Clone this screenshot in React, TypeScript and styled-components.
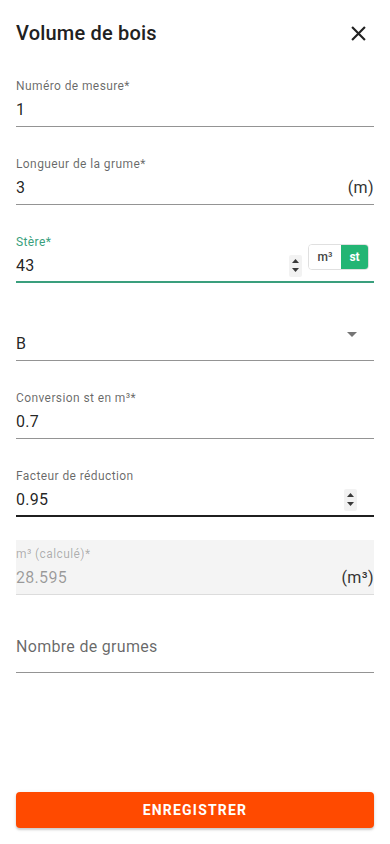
import styled, { createGlobalStyle } from "styled-components";

const GlobalStyle = createGlobalStyle`
  html, body {
    margin: 0;
    padding: 0;
    background: #fff;
    font-family: Roboto, "Liberation Sans", Arial, sans-serif;
  }
  * {
    box-sizing: border-box;
  }
`;

const Page = styled.div`
  height: 844px;
  padding: 0 16px 16px;
  display: flex;
  flex-direction: column;
  background: #fff;
`;

const Header = styled.div`
  height: 66px;
  display: flex;
  align-items: center;
  justify-content: space-between;
  margin-bottom: 13px;
`;

const Title = styled.h2`
  margin: 0;
  font-size: 20px;
  font-weight: 500;
  color: #212121;
  letter-spacing: 0.2px;
`;

const CloseButton = styled.button`
  width: 24px;
  height: 24px;
  padding: 0;
  margin-right: 4px;
  border: none;
  background: transparent;
  display: flex;
  align-items: center;
  justify-content: center;
  cursor: pointer;
`;

const Form = styled.div`
  display: flex;
  flex-direction: column;
  gap: 30px;
`;

const Field = styled.div<{ $underline?: "focused" | "hover" | "disabled" }>`
  height: ${(p) => (p.$underline === "disabled" ? "55px" : "48px")};
  display: flex;
  flex-direction: column;
  border-bottom: ${(p) =>
    p.$underline === "focused"
      ? "2px solid #3a9f7d"
      : p.$underline === "hover"
      ? "2px solid #1f1f1f"
      : p.$underline === "disabled"
      ? "1px solid #dcdcdc"
      : "1px solid rgba(0, 0, 0, 0.42)"};
  background: ${(p) => (p.$underline === "disabled" ? "#f4f4f4" : "transparent")};
  margin-top: ${(p) => (p.$underline === "disabled" ? "-7px" : "0")};
  padding-top: ${(p) => (p.$underline === "disabled" ? "7px" : "0")};
`;

const Label = styled.label<{ $color?: string; $large?: boolean }>`
  display: block;
  min-height: 14px;
  font-size: ${(p) => (p.$large ? "16px" : "12px")};
  line-height: ${(p) => (p.$large ? "23px" : "14px")};
  margin-top: ${(p) => (p.$large ? "10px" : "0")};
  color: ${(p) => p.$color || "rgba(0, 0, 0, 0.6)"};
  letter-spacing: ${(p) => (p.$large ? "0.3px" : "0.4px")};
`;

const Row = styled.div`
  flex: 1;
  display: flex;
  align-items: center;
  padding: 5px 0 5px;
`;

const Value = styled.span<{ $muted?: boolean }>`
  flex: 1;
  font-size: 16px;
  line-height: 23px;
  color: ${(p) => (p.$muted ? "rgba(0, 0, 0, 0.38)" : "rgba(0, 0, 0, 0.87)")};
  letter-spacing: 0.3px;
`;

const Unit = styled.span`
  font-size: 16px;
  line-height: 23px;
  color: #333;
  letter-spacing: 0.4px;
`;

const Spinner = styled.div<{ $right?: number }>`
  width: 13px;
  height: 22px;
  margin-right: ${(p) => p.$right ?? 0}px;
  background: #f2f2f2;
  border-radius: 2px;
  display: flex;
  flex-direction: column;
  align-items: center;
  justify-content: space-evenly;
`;

const Toggle = styled.div`
  display: flex;
  align-self: flex-start;
  height: 26px;
  margin-left: 6px;
  margin-right: 5px;
  margin-top: -10px;
  border: 1px solid #e0e0e0;
  border-radius: 4px;
  overflow: hidden;
`;

const ToggleOption = styled.span<{ $active?: boolean }>`
  width: ${(p) => (p.$active ? "27px" : "32px")};
  display: flex;
  align-items: center;
  justify-content: center;
  font-size: 12px;
  font-weight: ${(p) => (p.$active ? 700 : 500)};
  color: ${(p) => (p.$active ? "#fff" : "#444")};
  background: ${(p) => (p.$active ? "#23b574" : "#fff")};
`;

const SelectArrow = styled.div`
  align-self: flex-start;
  margin-right: 17px;
  width: 0;
  height: 0;
  border-left: 5px solid transparent;
  border-right: 5px solid transparent;
  border-top: 5px solid #757575;
`;

const SaveButton = styled.button`
  margin-top: auto;
  height: 36px;
  width: 100%;
  border: none;
  border-radius: 4px;
  background: #ff4a00;
  color: #fff;
  font-family: Roboto, "Liberation Sans", Arial, sans-serif;
  font-size: 14px;
  font-weight: 700;
  letter-spacing: 1.2px;
  text-transform: uppercase;
  box-shadow: 0px 2px 2px rgba(0, 0, 0, 0.14), 0px 1px 4px rgba(0, 0, 0, 0.1);
  cursor: pointer;
`;

const Arrows = () => (
  <>
    <svg width="7" height="4" viewBox="0 0 7 4">
      <path d="M0 4 L3.5 0 L7 4 Z" fill="#3a3a3a" />
    </svg>
    <svg width="7" height="4" viewBox="0 0 7 4">
      <path d="M0 0 L3.5 4 L7 0 Z" fill="#3a3a3a" />
    </svg>
  </>
);

export default function App() {
  return (
    <>
      <GlobalStyle />
      <Page>
        <Header>
          <Title>Volume de bois</Title>
          <CloseButton aria-label="Fermer">
            <svg width="15" height="15" viewBox="0 0 14 14">
              <path d="M1 1 L13 13 M13 1 L1 13" stroke="#212121" strokeWidth="2" />
            </svg>
          </CloseButton>
        </Header>

        <Form>
          <Field>
            <Label>Numéro de mesure*</Label>
            <Row>
              <Value>1</Value>
            </Row>
          </Field>

          <Field>
            <Label>Longueur de la grume*</Label>
            <Row>
              <Value>3</Value>
              <Unit>(m)</Unit>
            </Row>
          </Field>

          <Field $underline="focused">
            <Label $color="#3a9f7d">Stère*</Label>
            <Row>
              <Value>43</Value>
              <Spinner>
                <Arrows />
              </Spinner>
              <Toggle>
                <ToggleOption>m³</ToggleOption>
                <ToggleOption $active>st</ToggleOption>
              </Toggle>
            </Row>
          </Field>

          <Field>
            <Label />
            <Row>
              <Value>B</Value>
              <SelectArrow />
            </Row>
          </Field>

          <Field>
            <Label>Conversion st en m³*</Label>
            <Row>
              <Value>0.7</Value>
            </Row>
          </Field>

          <Field $underline="hover">
            <Label>Facteur de réduction</Label>
            <Row>
              <Value>0.95</Value>
              <Spinner $right={17}>
                <Arrows />
              </Spinner>
            </Row>
          </Field>

          <Field $underline="disabled">
            <Label $color="rgba(0, 0, 0, 0.3)">m³ (calculé)*</Label>
            <Row>
              <Value $muted>28.595</Value>
              <Unit>(m³)</Unit>
            </Row>
          </Field>

          <Field>
            <Label $large>Nombre de grumes</Label>
          </Field>
        </Form>

        <SaveButton>Enregistrer</SaveButton>
      </Page>
    </>
  );
}
